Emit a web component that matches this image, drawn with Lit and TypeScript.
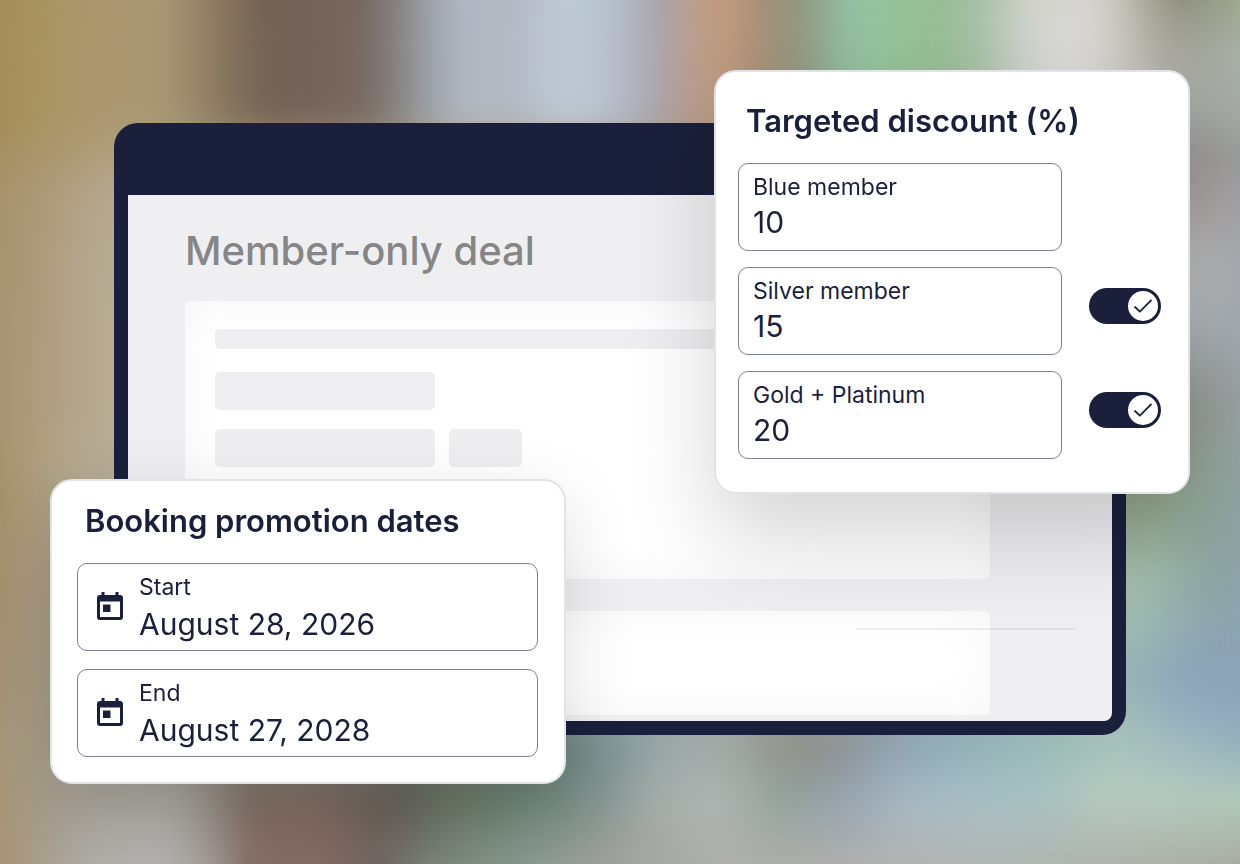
import { LitElement, html, css, unsafeCSS } from "lit";
import { customElement, property } from "lit/decorators.js";

/* Blurred photo: horizontal colour rows, each fading into the next one. */
type Row = { y: number; stops: string };

const topStops =
  "#a58c58 0,#a8945f 3%,#ac9870 8%,#a89874 13.5%,#8b7a60 17.5%,#716154 21.5%,#75625a 25%,#76675f 29%,#84817e 32%,#9da3a9 34.5%,#b4b9c5 37.5%,#b3b8c2 41%,#c0ccd8 46%,#b4bccb 50%,#a9a2a8 53.5%,#c09d85 56.5%,#c09a7e 59%,#a68e76 61.5%,#8f9680 64.5%,#93c2a6 68.5%,#96c297 72.5%,#97bd94 76%,#a7bfa6 79%,";

const rows: Row[] = [
  { y: 0, stops: topStops + "#cfd1c8 83%,#d8d7d3 87%,#c9c7be 90%,#a09f92 93%,#8a8c7c 95.5%,#a0ab90 100%" },
  { y: 60, stops: topStops + "#d4d5d2 83%,#dcdbd9 87%,#d0cec8 90%,#b4b2a8 93%,#a6a79f 96%,#a9b3ac 100%" },
  { y: 123, stops: topStops + "#d4d5d2 83%,#dcdbd9 87%,#c0beb8 92%,#a3a6a0 96%,#a5a9a6 100%" },
  { y: 150, stops: "#a58f62 0,#b0a07c 9%,#969390 96%,#9c9e9f 100%" },
  { y: 200, stops: "#a5926a 0,#b6aa92 9%,#aca3a1 96%,#a2a2a5 100%" },
  { y: 270, stops: "#a5926c 0,#b9ad96 9%,#bebfbf 96%,#a5aab0 100%" },
  { y: 330, stops: "#a69270 0,#baae96 9%,#adb5b9 96%,#a3a8ad 100%" },
  { y: 400, stops: "#a69272 0,#baae94 9%,#94968e 96%,#9ba3a5 100%" },
  { y: 480, stops: "#a39066 0,#b1a486 4%,#b8ae9c 9%,#919e7e 91%,#90a68f 95%,#93a5a5 100%" },
  { y: 580, stops: "#a38f6a 0,#a99c86 4%,#a5bfac 90%,#a3bfae 93%,#8fa6a2 97%,#8fa4ac 100%" },
  { y: 680, stops: "#a39070 0,#a69b86 4%,#98b2b8 91%,#8ca1bc 96%,#8ca3b8 100%" },
  { y: 740, stops: "#a69676 0,#a89d8b 4%,#60766c 42%,#6a827c 45.5%,#7f979c 50%,#98a6a8 53.5%,#a3aaa6 58%,#8e9084 63.5%,#8e8c8c 67%,#8c9ba8 71%,#8ca8b6 75%,#94b5b6 81%,#9bbdb4 86%,#a8c3bb 90%,#a0b8c0 95%,#94adbd 100%" },
  { y: 800, stops: "#a9966c 0,#a69c8b 3%,#a8a39a 6.5%,#a9a8a3 13.5%,#98928b 16.5%,#7c6a62 20%,#7d6861 25%,#70605a 29.5%,#5f5c55 32.5%,#68735f 36.5%,#6c8478 43%,#839390 48.5%,#a6afaa 53%,#b0b7b5 58%,#93a19a 63%,#97a4b0 68%,#a8bac6 73%,#a9c0c6 79%,#a9c3c3 84%,#b8cbc0 89%,#b5ccc0 95%,#b2cbb8 100%" },
  { y: 864, stops: "#a8926e 0,#a8a294 4%,#b0b0aa 8%,#b5b4b1 13%,#a39c97 17%,#846f67 20%,#856e66 25%,#736460 30.5%,#7a857e 34.5%,#8c9c92 42.5%,#a4a29e 50%,#adaeab 58%,#b2b2ae 72%,#b2b6b2 80%,#a8aaa0 100%" },
];

const pct = (y: number) => `${Math.round((y / 864) * 1000) / 10}%`;

/* One mask per row: clear above the previous row, solid from its own row on. */
const rowCss = unsafeCSS(
  rows
    .map(
      (r, i) =>
        `.row-${i}{background:linear-gradient(90deg,${r.stops});` +
        (i ? `-webkit-mask-image:linear-gradient(transparent ${pct(rows[i - 1].y)},#000 ${pct(r.y)});` : "") +
        `}`
    )
    .join("\n")
);

@customElement("photo-backdrop")
export class PhotoBackdrop extends LitElement {
  static styles = [
    css`
      :host {
        position: absolute;
        inset: 0;
        display: grid;
      }
      .row,
      .soften {
        grid-area: 1 / 1;
      }
      .soften {
        backdrop-filter: blur(18px);
      }
    `,
    rowCss,
  ];
  render() {
    return html`${rows.map((_, i) => html`<div class="row row-${i}"></div>`)}
      <div class="soften"></div>`;
  }
}

@customElement("text-field")
export class TextField extends LitElement {
  @property() label = "";
  @property() value = "";
  @property({ type: Boolean }) calendar = false;

  static styles = css`
    :host {
      display: block;
      min-width: 0;
    }
    .field {
      box-sizing: border-box;
      height: 88px;
      display: flex;
      align-items: center;
      gap: 16px;
      padding: 0 14px 2px;
      border: 1px solid #7d8093;
      border-radius: 10px;
      background: #fff;
    }
    .dated {
      padding: 0 20px 2px 19px;
    }
    .icon {
      flex: none;
      width: 26px;
      height: 28px;
    }
    .body {
      flex: 1;
      min-width: 0;
      display: flex;
      flex-direction: column;
    }
    .caption {
      font-size: 23px;
      line-height: 32px;
    }
    .dated .caption {
      line-height: 36px;
    }
    .value {
      width: 100%;
      height: 38px;
      padding: 0;
      border: 0;
      outline: 0;
      background: none;
      color: inherit;
      font: inherit;
      font-size: 30px;
      line-height: 38px;
    }
  `;

  render() {
    return html`<div class="field ${this.calendar ? "dated" : ""}">
      ${this.calendar
        ? html`<svg class="icon" viewBox="0 0 26 28" fill="currentColor" aria-hidden="true">
            <path
              fill-rule="evenodd"
              d="M4.5 0h3v3h11V0h3v3H23a3 3 0 0 1 3 3v19a3 3 0 0 1-3 3H3a3 3 0 0 1-3-3V6a3 3 0 0 1 3-3h1.5zM3 9.5V25h20V9.5z"
            />
            <path d="M6 12.5h7.5V20H6z" />
          </svg>`
        : ""}
      <div class="body">
        <label class="caption" for="input">${this.label}</label>
        <input class="value" id="input" type="text" .value=${this.value} />
      </div>
    </div>`;
  }
}

@customElement("check-switch")
export class CheckSwitch extends LitElement {
  @property() label = "";

  static styles = css`
    :host {
      display: block;
    }
    .switch {
      display: grid;
      width: 72px;
      height: 36px;
      color: #1a1f3b;
    }
    .box {
      grid-area: 1 / 1;
      appearance: none;
      width: 100%;
      height: 100%;
      margin: 0;
      border-radius: 18px;
      background: #9a9cab;
      cursor: pointer;
    }
    .box:checked {
      background: #1a1f3b;
    }
    .knob {
      grid-area: 1 / 1;
      place-self: center start;
      margin: 0 3px;
      width: 30px;
      height: 30px;
      z-index: 1;
      pointer-events: none;
    }
    .box:checked + .knob {
      justify-self: end;
    }
  `;

  render() {
    return html`<div class="switch">
      <input class="box" type="checkbox" role="switch" aria-label=${this.label} checked />
      <svg class="knob" viewBox="0 0 30 30" aria-hidden="true">
        <circle cx="15" cy="15" r="15" fill="#fff" />
        <path
          d="M7 16l4.8 4.6L23 9.4"
          fill="none"
          stroke="currentColor"
          stroke-width="1.8"
          stroke-linecap="round"
          stroke-linejoin="round"
        />
      </svg>
    </div>`;
  }
}

@customElement("app-root")
export class AppRoot extends LitElement {
  static styles = css`
    :host {
      display: block;
      color: #1a1f3b;
      font-family: Inter, "Open Sans", sans-serif;
    }
    .stage {
      box-sizing: border-box;
      position: relative;
      min-height: 100vh;
      display: flex;
      padding: 123px 114px 129px;
      overflow: hidden;
    }
    .device {
      position: relative;
      flex: 1;
      display: flex;
      padding: 72px 14px 14px;
      border-radius: 24px;
      background: #1a1f3b;
    }
    .page {
      flex: 1;
      display: flex;
      flex-direction: column;
      padding: 32px 122px 6px 57px;
      border-radius: 0 0 8px 8px;
      background: #efeff1;
    }
    .page-title {
      margin: 0 0 26px;
      font-size: 40px;
      line-height: 48px;
      font-weight: 500;
      color: #868686;
    }
    .panel {
      box-sizing: border-box;
      border-radius: 5px;
      background: #fff;
      box-shadow: inset 0 0 50px rgba(0, 0, 0, 0.04);
    }
    .main {
      height: 278px;
      display: flex;
      flex-direction: column;
      gap: 19px;
      padding: 28px 30px;
    }
    .extra {
      flex: 1;
      margin-top: 32px;
    }
    .bar {
      height: 38px;
      border-radius: 5px;
      background: #eeeef0;
    }
    .line {
      height: 20px;
      margin-bottom: 4px;
    }
    .wide {
      width: 220px;
    }
    .small {
      width: 73px;
    }
    .pair {
      display: flex;
      gap: 14px;
    }
    .rule {
      position: absolute;
      right: 51px;
      bottom: 105px;
      width: 219px;
      height: 2px;
      background: rgba(0, 0, 0, 0.06);
    }
    .card {
      box-sizing: border-box;
      position: absolute;
      border: 2px solid #e2e3e7;
      border-radius: 22px;
      background: #fff;
    }
    .discount {
      top: 70px;
      right: 50px;
      width: 476px;
      padding: 29px 27px 33px 22px;
      box-shadow: 0 44px 90px rgba(0, 0, 0, 0.17);
    }
    .booking {
      left: 50px;
      bottom: 80px;
      width: 516px;
      padding: 20px 26px 25px 25px;
      box-shadow: 0 20px 70px rgba(0, 0, 0, 0.13);
    }
    .card-title {
      margin: 0 0 22px;
      padding: 0 8px;
      font-size: 31px;
      line-height: 40px;
      font-weight: 600;
    }
    .tiers {
      display: grid;
      grid-template-columns: 1fr 72px;
      gap: 16px 27px;
    }
    .tier-switch {
      margin-top: 21px;
    }
    .tier {
      grid-column: 1;
    }
    .dates {
      display: flex;
      flex-direction: column;
      gap: 18px;
    }
  `;

  render() {
    return html`<main class="stage">
      <photo-backdrop></photo-backdrop>
      <section class="device">
        <div class="page">
          <h1 class="page-title">Member-only deal</h1>
          <div class="panel main">
            <div class="bar line"></div>
            <div class="bar wide"></div>
            <div class="pair">
              <div class="bar wide"></div>
              <div class="bar small"></div>
            </div>
          </div>
          <div class="panel extra"></div>
        </div>
        <div class="rule"></div>
      </section>
      <section class="card discount">
        <h2 class="card-title">Targeted discount (%)</h2>
        <div class="tiers">
          <text-field class="tier" label="Blue member" value="10"></text-field>
          <text-field class="tier" label="Silver member" value="15"></text-field>
          <check-switch class="tier-switch" label="Silver member discount"></check-switch>
          <text-field class="tier" label="Gold + Platinum" value="20"></text-field>
          <check-switch class="tier-switch" label="Gold + Platinum discount"></check-switch>
        </div>
      </section>
      <section class="card booking">
        <h2 class="card-title">Booking promotion dates</h2>
        <div class="dates">
          <text-field calendar label="Start" value="August 28, 2026"></text-field>
          <text-field calendar label="End" value="August 27, 2028"></text-field>
        </div>
      </section>
    </main>`;
  }
}
